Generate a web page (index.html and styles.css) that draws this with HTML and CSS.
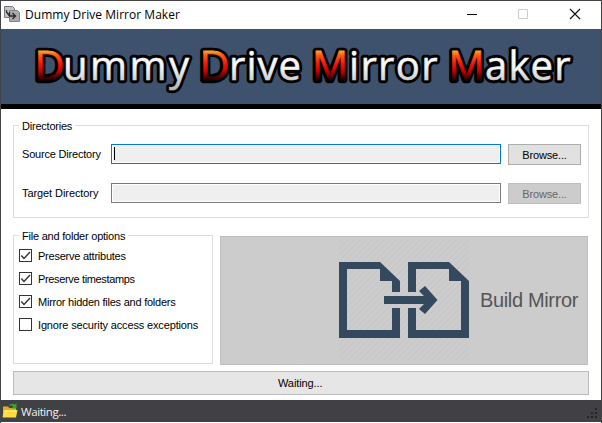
FILE: index.html
```html
<!DOCTYPE html>
<html lang="en">
<head>
<meta charset="utf-8">
<title>Dummy Drive Mirror Maker</title>
<link rel="stylesheet" href="styles.css">
</head>
<body>
<div class="window">
  <header class="titlebar">
    <svg class="app-icon" width="16" height="16" viewBox="0 0 16 16">
      <path d="M.5.5h8l2 2v9H.5z" fill="#c4c4c4" stroke="#777"/>
      <path d="M5.500 4.500h8l2 2v9h-10z" fill="#aaa" stroke="#858585"/>
      <path d="M2.500 4v2l3 4M5.500 6v4h6M8.500 7l3 3-3 3" fill="none" stroke="#292929" stroke-width="1.300"/>
    </svg>
    <span class="title">Dummy Drive Mirror Maker</span>
    <svg class="controls" width="138" height="28" viewBox="0 0 138 28" fill="none">
      <path d="M4 13.500h10" stroke="#000"/>
      <path d="M55.500 8.500h9v9h-9z" stroke="#ccc"/>
      <path d="M107 8l10 10M117 8l-10 10" stroke="#111" stroke-width="1.150"/>
    </svg>
  </header>
  <div class="banner">
    <svg width="600" height="75" viewBox="1 29 600 75">
      <defs>
        <linearGradient id="fire" x1="0" y1="50" x2="0" y2="80" gradientUnits="userSpaceOnUse">
          <stop offset="0" stop-color="#ffb52c"/><stop offset=".18" stop-color="#ff5a16"/><stop offset=".45" stop-color="#f81808"/><stop offset=".72" stop-color="#c00000"/><stop offset="1" stop-color="#180000"/>
        </linearGradient>
        <linearGradient id="silver" x1="0" y1="50" x2="0" y2="89" gradientUnits="userSpaceOnUse">
          <stop offset="0" stop-color="#fff"/><stop offset=".45" stop-color="#f4f4f4"/><stop offset="1" stop-color="#b8b8b8"/>
        </linearGradient>
      </defs>
      <g class="logo-outline">
        <text x="34.500" y="79.500" textLength="30" lengthAdjust="spacingAndGlyphs">D</text><text x="63" y="79.500" textLength="126">ummy</text>
        <text x="199.500" y="79.500" textLength="30" lengthAdjust="spacingAndGlyphs">D</text><text x="229" y="79.500" textLength="72">rive</text>
        <text x="312" y="79.500">M</text><text x="349" y="79.500" textLength="88.500">irror</text>
        <text x="448.500" y="79.500">M</text><text x="485" y="79.500" textLength="85.500">aker</text>
      </g>
      <g class="logo">
        <text class="cap" x="34.500" y="79.500" textLength="30" lengthAdjust="spacingAndGlyphs">D</text><text x="63" y="79.500" textLength="126">ummy</text>
        <text class="cap" x="199.500" y="79.500" textLength="30" lengthAdjust="spacingAndGlyphs">D</text><text x="229" y="79.500" textLength="72">rive</text>
        <text class="cap" x="312" y="79.500">M</text><text x="349" y="79.500" textLength="88.500">irror</text>
        <text class="cap" x="448.500" y="79.500">M</text><text x="485" y="79.500" textLength="85.500">aker</text>
      </g>
    </svg>
  </div>
  <main class="content">
    <section class="group directories">
      <h2 class="legend">Directories</h2>
      <div class="row">
        <span class="label">Source Directory</span>
        <div class="field active"><i class="caret"></i></div>
        <div class="button">Browse...</div>
      </div>
      <div class="row">
        <span class="label target">Target Directory</span>
        <div class="field"></div>
        <div class="button disabled">Browse...</div>
      </div>
    </section>
    <div class="lower">
      <section class="group options">
        <h2 class="legend">File and folder options</h2>
        <div class="check"><svg class="box" viewBox="1 1 11 11"><path d="M2.300 6.500l2.700 3 6-6.500"/></svg><span>Preserve attributes</span></div>
        <div class="check"><svg class="box" viewBox="1 1 11 11"><path d="M2.300 6.500l2.700 3 6-6.500"/></svg><span class="tight">Preserve timestamps</span></div>
        <div class="check"><svg class="box" viewBox="1 1 11 11"><path d="M2.300 6.500l2.700 3 6-6.500"/></svg><span>Mirror hidden files and folders</span></div>
        <div class="check"><svg class="box" viewBox="1 1 11 11"></svg><span class="loose">Ignore security access exceptions</span></div>
      </section>
      <div class="build">
        <svg class="build-icon" width="130" height="120" viewBox="339 240 130 120">
          <defs><pattern id="hatch" width="6" height="6" patternUnits="userSpaceOnUse"><path d="M-1 7L7-1M-1 1l2-2M5 7l2-2" stroke="#c5c5c5" stroke-width="1"/></pattern></defs>
          <path d="M339 240h130v120H339z" fill="url(#hatch)"/>
          <g fill="#34495e">
            <path d="M339 262h41l20 19v11h-8v-11h-12v-12h-33v61h45v-22h8v30h-61z"/>
            <path d="M408 262h41l20 19v57h-61v-30h8v22h45v-49h-12v-12h-33v23h-8z"/>
            <path d="M384 296h40l-5-5 6-5 12.500 14-12.500 14-6-5 5-5h-40z"/>
          </g>
        </svg>
        <span class="build-text">Build Mirror</span>
      </div>
    </div>
    <div class="progress"><span>Waiting...</span></div>
  </main>
  <footer class="statusbar">
    <svg width="16" height="16" viewBox="0 0 16 16">
      <path d="M1 3.500h5l1.500 1.500H14v9H1z" fill="#e3ad16"/>
      <path d="M.5 14L2 7h13.500L14 14.500H1z" fill="#ffdc42"/>
      <path d="M2.500 8h12" stroke="#fff099"/>
      <path d="M6.500 3C8 .5 11 0 13 1.500L14.500 0v5.500H9.500l1.800-2C10 2.500 8.500 2.300 6.500 3z" fill="#29a92e"/>
    </svg>
    <span class="status">Waiting...</span>
    <svg class="grip" width="12" height="12" viewBox="0 0 12 12" fill="#242427"><path d="M8 0h2v2H8zM4 4h2v2H4zM8 4h2v2H8zM0 8h2v2H0zM4 8h2v2H4zM8 8h2v2H8z"/></svg>
  </footer>
</div>
</body>
</html>
```
FILE: styles.css
```css
* { box-sizing: border-box; }
body { margin: 0; font-family: "Liberation Sans", Arial, sans-serif; font-size: 11px; color: #000; }
.window { width: 602px; height: 423px; border: 1px solid #444448; border-bottom: 0; background: #fff; display: flex; flex-direction: column; overflow: hidden; }
.titlebar { height: 28px; flex: none; display: flex; align-items: flex-start; }
.app-icon { margin: 5px 5px 0 3px; }
.title { font: 12px/27px "Open Sans", sans-serif; letter-spacing: .03px; white-space: nowrap; }
.controls { margin-left: auto; }
.banner { height: 80px; flex: none; background: #3f526d; border-bottom: 5px solid #000; }
.banner svg { display: block; }
.logo, .logo-outline { font: 40px "Open Sans", sans-serif; }
.logo-outline { fill: #000; stroke: #000; stroke-width: 6.5px; stroke-linejoin: round; }
.logo { fill: url(#silver); stroke: url(#silver); stroke-width: .5px; }
.cap { fill: url(#fire); stroke: url(#fire); stroke-width: .8px; }
.content { height: 291px; flex: none; padding: 16px 12px 0; }
.group { border: 1px solid #dcdcdc; }
.legend { display: block; width: max-content; margin: -7px 0 0 5px; padding: 0 3px; background: #fff; font-size: 11px; line-height: 14px; font-weight: 400; letter-spacing: -.22px; white-space: nowrap; }
.directories { width: 576px; height: 93px; }
.row { height: 22px; display: flex; align-items: center; padding-left: 8px; }
.directories .row { margin-top: 10px; }
.directories .row + .row { margin-top: 17px; }
.label { width: 89px; letter-spacing: -.2px; white-space: nowrap; }
.target { letter-spacing: -.08px; }
.field { width: 390px; height: 20px; margin-right: 7px; border: 1px solid #7a7a7a; background: #efefef; box-shadow: inset 0 0 0 1px #fff; padding: 2px; }
.field.active { border-color: #0078d7; }
.caret { display: block; width: 1px; height: 13px; background: #000; }
.button { width: 73px; height: 21px; border: 1px solid #adadad; background: #e1e1e1; line-height: 20px; text-align: center; letter-spacing: -.15px; }
.button.disabled { background: #ccc; border-color: #bfbfbf; color: #666; }
.lower { display: flex; gap: 7px; margin-top: 17px; }
.options { width: 200px; height: 129px; }
.check { height: 23px; display: flex; align-items: center; padding-left: 5px; gap: 6px; letter-spacing: -.24px; white-space: nowrap; }
.tight { letter-spacing: -.35px; }
.loose { letter-spacing: -.15px; }
.legend + .check { margin-top: 1px; }
.box { width: 13px; height: 13px; border: 1px solid #333; fill: none; stroke: #333; stroke-width: 1.4px; }
.build { width: 368px; height: 129px; margin-top: 1px; background: #ccc; border: 1px solid #bfbfbf; display: flex; align-items: flex-start; padding: 3px 0 0 118px; }
.build-icon { flex: none; }
.build-text { margin: 49px 0 0 11px; font-size: 20px; line-height: 22px; letter-spacing: -.35px; color: #555; white-space: nowrap; }
.progress { width: 576px; height: 24px; margin-top: 6px; border: 1px solid #bcbcbc; background: #e6e6e6; line-height: 23px; padding-left: 264px; letter-spacing: -.1px; }
.statusbar { height: 22px; flex: none; display: flex; align-items: center; padding: 0 2px 0 1px; background: #404045; color: #f1f1f1; }
.status { margin-left: 3px; font: 11.5px/22px "Open Sans", sans-serif; letter-spacing: -.42px; padding-top: 1px; }
.grip { margin: 5px 0 0 auto; }
```
